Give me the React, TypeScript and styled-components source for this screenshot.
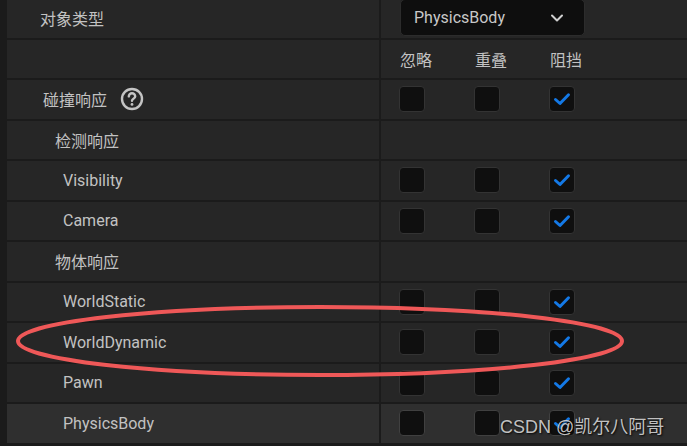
import styled, { createGlobalStyle } from "styled-components"

const GlobalStyle = createGlobalStyle`
  html, body {
    margin: 0;
    padding: 0;
    background: #1b1b1b;
    overflow: hidden;
  }
  body {
    font-family: Roboto, "Noto Sans CJK SC", sans-serif;
  }
`

type Resp = "ignore" | "overlap" | "block"

interface IRow {
  label: string
  indent: number
  kind: "type" | "header" | "check" | "group"
  value?: Resp
  help?: boolean
  hover?: boolean
}

const rows: IRow[] = [
  { label: "对象类型", indent: 33, kind: "type" },
  { label: "", indent: 0, kind: "header" },
  { label: "碰撞响应", indent: 36, kind: "check", value: "block", help: true },
  { label: "检测响应", indent: 48, kind: "group" },
  { label: "Visibility", indent: 56, kind: "check", value: "block" },
  { label: "Camera", indent: 56, kind: "check", value: "block" },
  { label: "物体响应", indent: 48, kind: "group" },
  { label: "WorldStatic", indent: 56, kind: "check", value: "block" },
  { label: "WorldDynamic", indent: 56, kind: "check", value: "block" },
  { label: "Pawn", indent: 56, kind: "check", value: "block" },
  { label: "PhysicsBody", indent: 56, kind: "check", value: "block", hover: true },
]

const columns: { key: Resp; title: string }[] = [
  { key: "ignore", title: "忽略" },
  { key: "overlap", title: "重叠" },
  { key: "block", title: "阻挡" },
]

const Stage = styled.div`
  position: relative;
  width: 687px;
  height: 446px;
  overflow: hidden;
`

const Panel = styled.div`
  display: flex;
  flex-direction: column;
  gap: 2px;
  margin-top: -1px;
  padding-left: 7px;
`

const Row = styled.div`
  display: grid;
  grid-template-columns: 372px 1fr;
  column-gap: 2px;
  height: 38.5px;
  flex: none;
`

const NameCell = styled.div<{ $indent: number; $hover?: boolean }>`
  display: flex;
  align-items: center;
  gap: 13px;
  padding-left: ${(p) => p.$indent}px;
  background: ${(p) => (p.$hover ? "#2f2f2f" : "#262626")};
  color: #c2c2c2;
  font-size: 16px;
`

const ValueCell = styled.div<{ $hover?: boolean }>`
  display: flex;
  align-items: center;
  padding-left: 18px;
  background: ${(p) => (p.$hover ? "#2f2f2f" : "#262626")};
`

const ColumnGrid = styled.div`
  display: grid;
  grid-template-columns: repeat(3, 75px);
  align-items: center;
`

const ColumnTitle = styled.div`
  color: #c2c2c2;
  font-size: 16px;
  padding-left: 1px;
`

const Box = styled.div<{ $light?: boolean }>`
  width: 24px;
  height: 24px;
  border: 1px solid ${(p) => (p.$light ? "#404040" : "#333333")};
  border-radius: 4px;
  background: #0f0f0f;
  display: flex;
  align-items: center;
  justify-content: center;
`

const Dropdown = styled.div`
  box-sizing: border-box;
  width: 185px;
  height: 37px;
  margin-top: -1px;
  margin-left: 1px;
  display: flex;
  align-items: center;
  justify-content: space-between;
  padding: 0 20px 0 13px;
  background: #0e0e0e;
  border: 1px solid #2c2c2c;
  border-radius: 5px;
  color: #c8c8c8;
  font-size: 16px;
`

const Overlay = styled.svg`
  position: absolute;
  left: 0;
  top: 0;
  pointer-events: none;
`

const Watermark = styled.div`
  position: absolute;
  left: 500px;
  top: 412px;
  color: rgba(215, 215, 215, 0.9);
  font-family: "Liberation Sans", "Noto Sans CJK SC", sans-serif;
  font-size: 18px;
  text-shadow: 1px 1px 2px rgba(0, 0, 0, 0.9);
  white-space: nowrap;
`

const HelpIcon = () => (
  <svg width="24" height="24" viewBox="0 0 24 24">
    <circle cx="12" cy="12" r="10" fill="none" stroke="#c4c4c4" strokeWidth="2.4" />
    <path
      d="M8.8 9.4a3.2 3.2 0 0 1 6.4 0c0 2-3.2 2.4-3.2 4.4"
      fill="none"
      stroke="#c4c4c4"
      strokeWidth="2.4"
      strokeLinecap="round"
    />
    <circle cx="12" cy="17.4" r="1.4" fill="#c4c4c4" />
  </svg>
)

const Check = () => (
  <svg width="20" height="20" viewBox="0 0 20 20">
    <path
      d="M3.5 10.5 L8 14.5 L16.5 5.8"
      fill="none"
      stroke="#1479e6"
      strokeWidth="3"
      strokeLinecap="round"
      strokeLinejoin="round"
    />
  </svg>
)

const Chevron = () => (
  <svg width="14" height="14" viewBox="0 0 14 14">
    <path
      d="M2 4.5 L7 9.5 L12 4.5"
      fill="none"
      stroke="#d0d0d0"
      strokeWidth="2"
      strokeLinecap="round"
      strokeLinejoin="round"
    />
  </svg>
)

const App = () => {
  return (
    <Stage>
      <GlobalStyle />
      <Panel>
        {rows.map((row, i) => (
          <Row key={i}>
            <NameCell $indent={row.indent} $hover={row.hover}>
              {row.label}
              {row.help && <HelpIcon />}
            </NameCell>
            <ValueCell $hover={row.hover}>
              {row.kind === "type" && (
                <Dropdown>
                  PhysicsBody
                  <Chevron />
                </Dropdown>
              )}
              {row.kind === "header" && (
                <ColumnGrid>
                  {columns.map((c) => (
                    <ColumnTitle key={c.key}>{c.title}</ColumnTitle>
                  ))}
                </ColumnGrid>
              )}
              {row.kind === "check" && (
                <ColumnGrid>
                  {columns.map((c) => (
                    <Box key={c.key} $light={row.hover}>
                      {row.value === c.key && <Check />}
                    </Box>
                  ))}
                </ColumnGrid>
              )}
            </ValueCell>
          </Row>
        ))}
      </Panel>
      <Overlay width="687" height="446">
        <ellipse
          cx="320"
          cy="341"
          rx="302"
          ry="34"
          fill="none"
          stroke="#ef5858"
          strokeWidth="4"
        />
      </Overlay>
      <Watermark>CSDN @凯尔八阿哥</Watermark>
    </Stage>
  )
}

export default App
